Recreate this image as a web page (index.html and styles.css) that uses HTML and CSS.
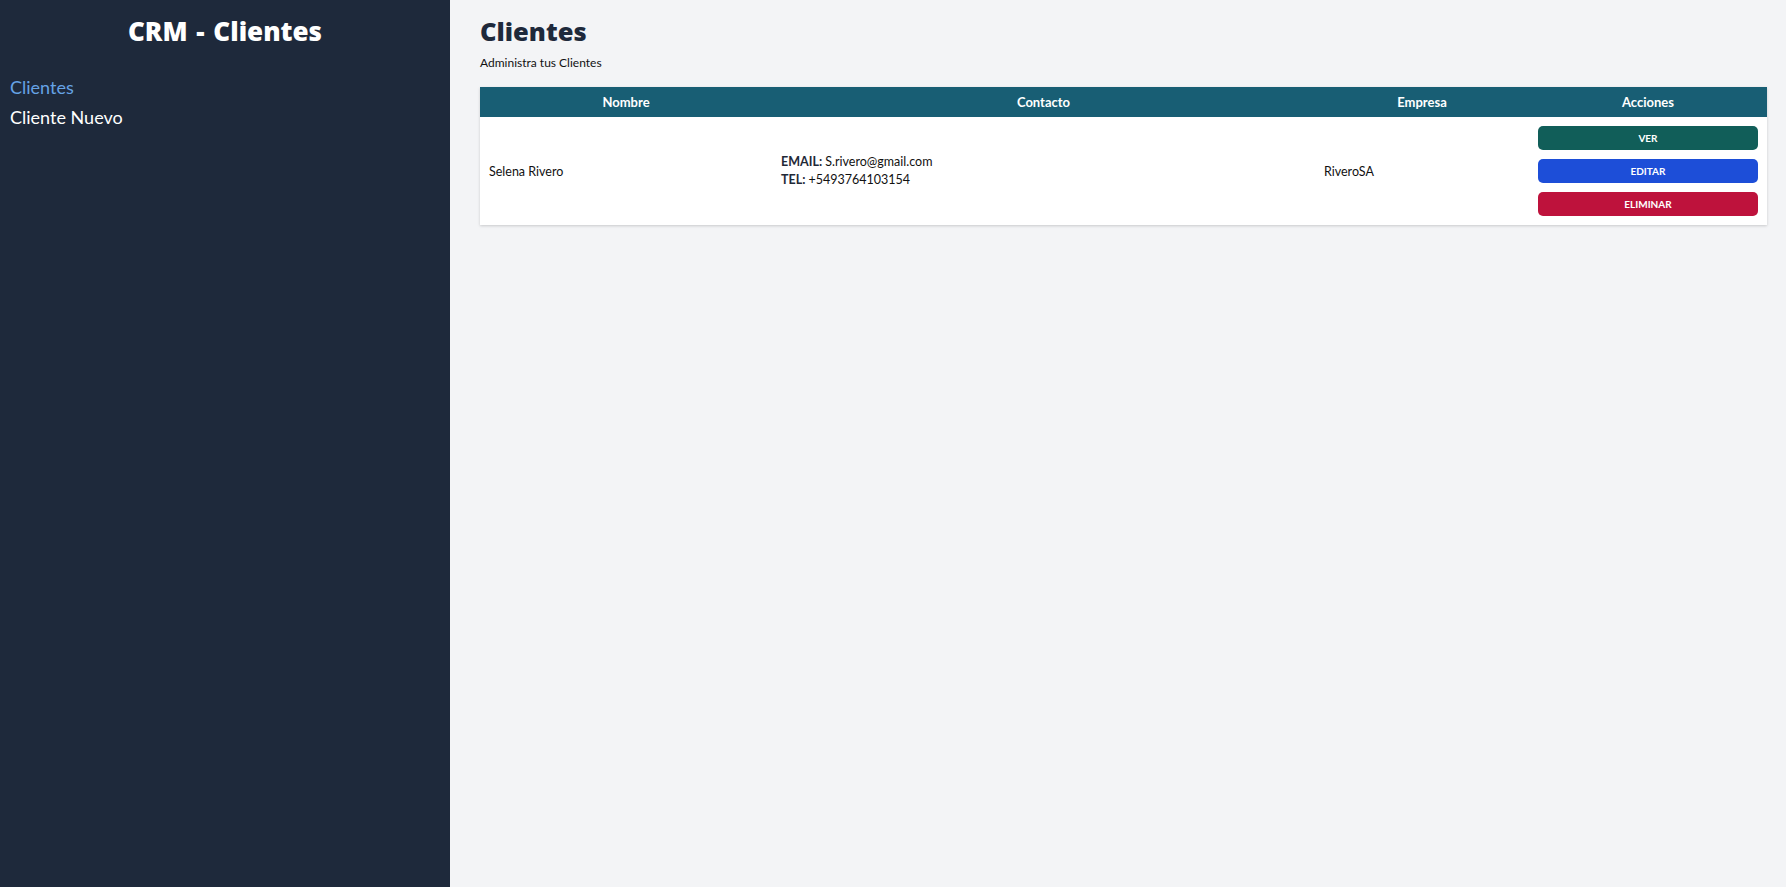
FILE: index.html
```html
<!DOCTYPE html>
<html lang="es">
<head>
<meta charset="utf-8">
<title>CRM - Clientes</title>
<link rel="stylesheet" href="styles.css">
</head>
<body>
<div class="layout">
  <aside class="sidebar">
    <h2 class="brand">CRM - Clientes</h2>
    <nav class="nav">
      <a href="#" class="nav-link active">Clientes</a>
      <a href="#" class="nav-link">Cliente Nuevo</a>
    </nav>
  </aside>
  <main class="main">
    <h1 class="page-title">Clientes</h1>
    <p class="page-sub">Administra tus Clientes</p>
    <table class="table">
      <colgroup>
        <col class="col-nombre">
        <col class="col-contacto">
        <col class="col-empresa">
        <col class="col-acciones">
      </colgroup>
      <thead>
        <tr>
          <th>Nombre</th>
          <th>Contacto</th>
          <th>Empresa</th>
          <th>Acciones</th>
        </tr>
      </thead>
      <tbody>
        <tr>
          <td>Selena Rivero</td>
          <td>
            <p class="contact-line"><span class="label">EMAIL:</span> S.rivero@gmail.com</p>
            <p class="contact-line"><span class="label">TEL:</span> +5493764103154</p>
          </td>
          <td>RiveroSA</td>
          <td>
            <div class="actions">
              <button class="btn btn-ver">Ver</button>
              <button class="btn btn-editar">Editar</button>
              <button class="btn btn-eliminar">Eliminar</button>
            </div>
          </td>
        </tr>
      </tbody>
    </table>
  </main>
</div>
</body>
</html>
```
FILE: styles.css
```css
* { box-sizing: border-box; }
html, body { margin: 0; padding: 0; background: #ffffff; }
body { font-family: Lato, "Noto Sans", "Liberation Sans", sans-serif; color: #111111; }

.layout { display: flex; height: 887px; }

.sidebar {
  width: 450px;
  flex-shrink: 0;
  background: #1e293b;
  padding: 14px 10px 0 10px;
}
.brand {
  margin: 0;
  text-align: center;
  color: #ffffff;
  font-family: "Noto Sans", "Open Sans", sans-serif;
  font-weight: 900;
  font-size: 26px;
  line-height: 34px;
  word-spacing: 2px;
}
.nav { display: flex; flex-direction: column; margin-top: 24px; }
.nav-link {
  color: #ffffff;
  text-decoration: none;
  font-size: 18px;
  line-height: 30px;
}
.nav-link.active { color: #66a3e6; }

.main {
  flex: 1;
  background: #f3f4f6;
  padding: 14px 19px 0 30px;
}
.page-title {
  margin: 0;
  color: #1e293b;
  font-family: "Noto Sans", "Open Sans", sans-serif;
  font-weight: 900;
  font-size: 25.5px;
  line-height: 34px;
}
.page-sub {
  margin: 7px 0 0 0;
  font-size: 12px;
  line-height: 16px;
  color: #111111;
}

.table {
  margin-top: 16px;
  width: 100%;
  border-collapse: collapse;
  table-layout: fixed;
  background: #ffffff;
  box-shadow: 0 1px 3px rgba(0,0,0,0.12), 0 1px 2px rgba(0,0,0,0.06);
}
.col-nombre { width: 292px; }
.col-contacto { width: 543px; }
.col-empresa { width: 214px; }
.col-acciones { width: 238px; }

.table th {
  background: #185e74;
  color: #ffffff;
  font-weight: 700;
  font-size: 13px;
  height: 30px;
  padding: 0 9px;
  text-align: center;
}
.table td {
  padding: 9px;
  font-size: 12.5px;
  vertical-align: middle;
  text-align: left;
}
.contact-line { margin: 0; line-height: 18px; }
.label { font-weight: 700; color: #1f2937; }

.actions { display: flex; flex-direction: column; gap: 9px; }
.btn {
  display: block;
  width: 100%;
  height: 24px;
  border: 0;
  border-radius: 5px;
  color: #ffffff;
  font-family: inherit;
  font-weight: 700;
  font-size: 10px;
  text-transform: uppercase;
  padding: 0;
}
.btn-ver { background: #115e59; }
.btn-editar { background: #1d4ed8; }
.btn-eliminar { background: #be123c; }
```
